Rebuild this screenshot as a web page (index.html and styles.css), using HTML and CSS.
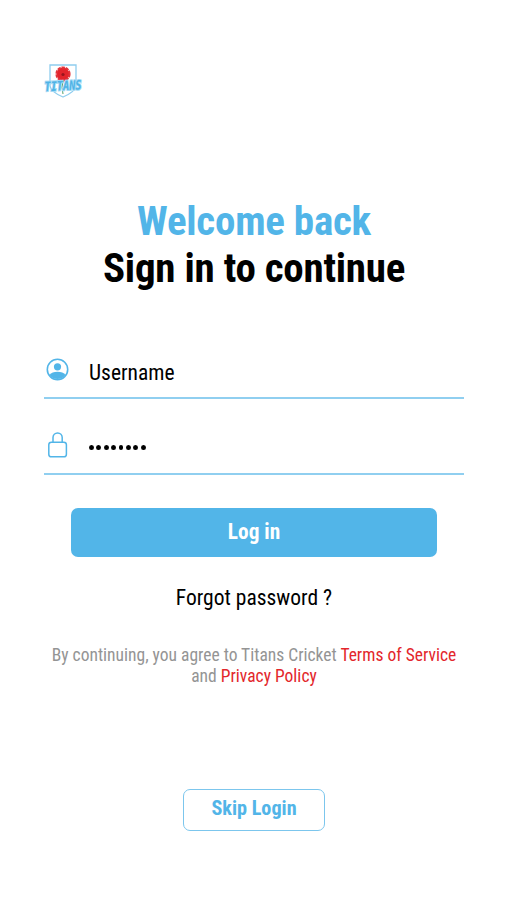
FILE: index.html
```html
<!DOCTYPE html>
<html lang="en">
<head>
<meta charset="utf-8">
<meta name="viewport" content="width=device-width, initial-scale=1">
<title>Titans Cricket – Sign in</title>
<link rel="stylesheet" href="styles.css">
</head>
<body>
<main class="screen">
  <svg class="logo" viewBox="0 0 42 36" role="img" aria-label="Titans">
    <path d="M8 2H34V23Q33 29 21 34Q9 29 8 23Z" fill="#fff" stroke="#8fcdee" stroke-width="1.3"/>
    <path d="M21 18Q19 24 21 31" fill="none" stroke="#55a06a" stroke-width="1"/>
    <circle cx="21" cy="11" r="6.4" fill="#e3242b"/>
    <circle cx="21" cy="11" r="6.6" fill="none" stroke="#e3343b" stroke-width="2" stroke-dasharray="3.4 .8"/>
    <circle cx="21" cy="11.5" r="1.6" fill="#98151d"/>
    <text class="logo-name" x="21" y="27.3" text-anchor="middle" textLength="37" lengthAdjust="spacingAndGlyphs" transform="rotate(-3 21 22)">TITANS</text>
  </svg>
  <h1 class="title"><span class="accent">Welcome back</span><span>Sign in to continue</span></h1>
  <form class="form">
    <div class="field">
      <svg class="icon" viewBox="0 0 26 28">
        <circle cx="13.5" cy="12.5" r="10.2" fill="none" stroke="#52b5e8" stroke-width="1.6"/>
        <circle cx="13.5" cy="9.8" r="3.6" fill="#52b5e8"/>
        <path d="M5.5 18Q8 14.8 13.5 14.8T21.5 18Q18.8 22 13.5 22T5.5 18Z" fill="#52b5e8"/>
      </svg>
      <span class="value">Username</span>
    </div>
    <div class="field">
      <svg class="icon" viewBox="0 0 26 28">
        <rect x="4.8" y="11.2" width="17.6" height="14.6" rx="2.6" fill="none" stroke="#52b5e8" stroke-width="1.5"/>
        <path d="M9 11.2V6.6a4.6 4.6 0 0 1 9.2 0V11.2" fill="none" stroke="#52b5e8" stroke-width="1.5"/>
      </svg>
      <span class="dots"><i></i><i></i><i></i><i></i><i></i><i></i><i></i><i></i></span>
    </div>
    <button class="login" type="button">Log in</button>
  </form>
  <a class="forgot">Forgot password ?</a>
  <p class="terms">By continuing, you agree to Titans Cricket <a>Terms of Service</a><br>and <a>Privacy Policy</a></p>
  <button class="skip" type="button">Skip Login</button>
</main>
</body>
</html>
```
FILE: styles.css
```css
* { box-sizing: border-box; }
body {
  margin: 0;
  background: #fff;
  color: #000;
  font-family: "Roboto Condensed", Roboto, sans-serif;
  font-stretch: 75%;
}
.screen {
  display: flex;
  flex-direction: column;
  align-items: center;
  height: 900px;
  padding: 63px 43px 0 44px;
}
.logo {
  align-self: flex-start;
  width: 42px;
  height: 36px;
  margin-left: -2px;
  overflow: visible;
}
.logo-name {
  font: italic 700 13px "DejaVu Sans Mono", monospace;
  fill: #4fb3e6;
  stroke: #a5daf5;
  stroke-width: 2px;
  paint-order: stroke;
}
.title {
  display: flex;
  flex-direction: column;
  align-items: center;
  margin: 99px 0 0;
  font-size: 41px;
  font-weight: 700;
  line-height: 46.5px;
  letter-spacing: -.25px;
  white-space: nowrap;
}
.accent { color: #52b5e8; }
.form {
  display: flex;
  flex-direction: column;
  align-items: center;
  width: 100%;
  margin-top: 53px;
}
.field {
  display: flex;
  width: 100%;
  height: 75.5px;
  padding-top: 13px;
  border-bottom: 2px solid #90cff0;
}
.field:first-child { height: 55px; padding-top: 13px; }
.field:nth-child(2) { padding-top: 32px; }
.icon { width: 26px; height: 28px; }
.value { margin: 3px 0 0 19px; font-size: 21.5px; line-height: 25px; }
.dots { display: flex; gap: 2.6px; margin: 14px 0 0 19px; }
.dots i { width: 4.8px; height: 5px; border-radius: 50%; background: #000; }
button { font-family: inherit; font-stretch: inherit; font-weight: 700; }
.login {
  width: 366px;
  height: 49px;
  margin-top: 33px;
  padding: 0 0 2px;
  border: 0;
  border-radius: 7px;
  background: #52b5e8;
  color: #fff;
  font-size: 21.3px;
}
.forgot { margin-top: 28px; font-size: 21.5px; line-height: 26px; }
.terms {
  margin: 34px 0 0;
  color: #949494;
  font-size: 17.5px;
  line-height: 21px;
  text-align: center;
  white-space: nowrap;
}
.terms a { color: #e3262b; }
.skip {
  width: 142px;
  height: 42px;
  margin-top: 102px;
  padding: 0 0 3px;
  border: 1.5px solid #7cc6ed;
  border-radius: 7px;
  background: #fff;
  color: #52b5e8;
  font-size: 20.2px;
}
```
